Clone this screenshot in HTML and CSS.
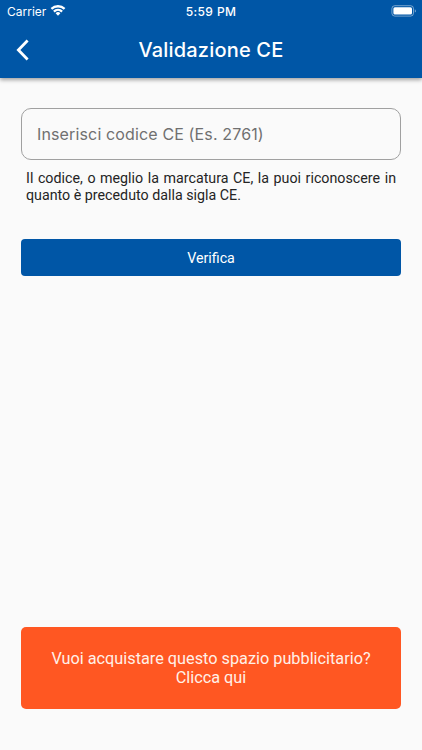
FILE: index.html
```html
<!DOCTYPE html>
<html lang="it">
<head>
<meta charset="utf-8">
<title>Validazione CE</title>
<link rel="stylesheet" href="styles.css">
</head>
<body>
<div class="screen">
  <header class="appbar">
    <div class="status">
      <div class="status-left">
        <span class="carrier">Carrier</span>
        <svg class="wifi" width="16" height="12" viewBox="0 0 16 12" fill="#fff">
          <path d="M.6 4.1a10.6 10.6 0 0 1 14.8 0l-1.6 1.7a8.3 8.3 0 0 0-11.6 0z"/>
          <path d="M3.1 6.7a7.1 7.1 0 0 1 9.8 0l-1.6 1.7a4.8 4.8 0 0 0-6.6 0z"/>
          <path d="M5.6 9.2a3.5 3.5 0 0 1 4.8 0L8 11.7z"/>
        </svg>
      </div>
      <span class="clock">5:59 PM</span>
      <svg class="battery" width="26" height="12" viewBox="0 0 26 12">
        <rect x=".9" y=".7" width="21.6" height="10.4" rx="2.9" fill="none" stroke="#fff" stroke-opacity=".45"/>
        <rect x="2.4" y="2.2" width="18.6" height="7.4" rx="1.5" fill="#fff"/>
        <path d="M23.8 4.2c1.4.6 1.4 2.8 0 3.4z" fill="#fff" fill-opacity=".55"/>
      </svg>
    </div>
    <div class="nav">
      <svg class="back" width="14" height="22" viewBox="0 0 14 22" fill="none" stroke="#fff" stroke-width="2.8">
        <path d="M11.6 1.6 2.4 11l9.2 9.4"/>
      </svg>
      <h1 class="title">Validazione CE</h1>
      <span></span>
    </div>
  </header>
  <main class="content">
    <input class="field" type="text" placeholder="Inserisci codice CE (Es. 2761)">
    <p class="hint">Il codice, o meglio la marcatura CE, la puoi riconoscere in quanto è preceduto dalla sigla CE.</p>
    <button class="verify" type="button">Verifica</button>
    <div class="ad">Vuoi acquistare questo spazio pubblicitario?<br>Clicca qui</div>
  </main>
</div>
</body>
</html>
```
FILE: styles.css
```css
* {
  box-sizing: border-box;
}

body {
  margin: 0;
  background: #fafafa;
  font-family: Roboto, sans-serif;
}

.screen {
  display: flex;
  flex-direction: column;
  height: 750px;
  overflow: hidden;
}

.appbar {
  height: 78px;
  background: #0056a6;
  color: #fff;
  box-shadow: 0 2px 4px rgba(0, 0, 0, .36);
  font-family: Inter, sans-serif;
}

.status {
  display: grid;
  grid-template-columns: 1fr auto 1fr;
  align-items: center;
  height: 22px;
  padding: 0 5px 0 7px;
}

.status-left {
  display: flex;
  align-items: center;
  gap: 5px;
}

.carrier {
  font-size: 12px;
  letter-spacing: 0;
}

.wifi {
  margin: -2px 0 0 -1px;
}

.clock {
  margin-left: -2px;
  font-size: 12px;
  font-weight: 500;
  letter-spacing: .4px;
}

.battery {
  justify-self: end;
  margin-top: -1px;
}

.nav {
  display: grid;
  grid-template-columns: 1fr auto 1fr;
  align-items: center;
  height: 55px;
  padding: 0 16px;
}

.title {
  margin: 0;
  font-size: 20px;
  font-weight: 450;
  letter-spacing: .18px;
  line-height: 24px;
}

.content {
  display: flex;
  flex: 1;
  flex-direction: column;
  padding: 30px 21px 41px;
}

.field {
  width: 100%;
  height: 52px;
  padding: 0 15px;
  border: 1px solid #a0a0a0;
  border-radius: 10px;
  background: transparent;
  font-family: Inter, sans-serif;
  font-size: 16px;
  letter-spacing: .14px;
}

.field::placeholder {
  color: #707070;
  opacity: 1;
}

.hint {
  margin: 10px 5px 0;
  color: #242424;
  font-size: 14.25px;
  line-height: 17px;
  text-align: justify;
}

.verify {
  height: 37px;
  margin-top: 35px;
  padding: 0;
  border: 0;
  border-radius: 4px;
  background: #0056a6;
  color: #fff;
  font-family: Roboto, sans-serif;
  font-size: 14.25px;
}

.ad {
  display: flow-root;
  height: 82px;
  margin-top: auto;
  padding-top: 22px;
  border-radius: 5px;
  background: #ff5722;
  color: #fff0e8;
  font-size: 16.27px;
  line-height: 19px;
  text-align: center;
}
```
